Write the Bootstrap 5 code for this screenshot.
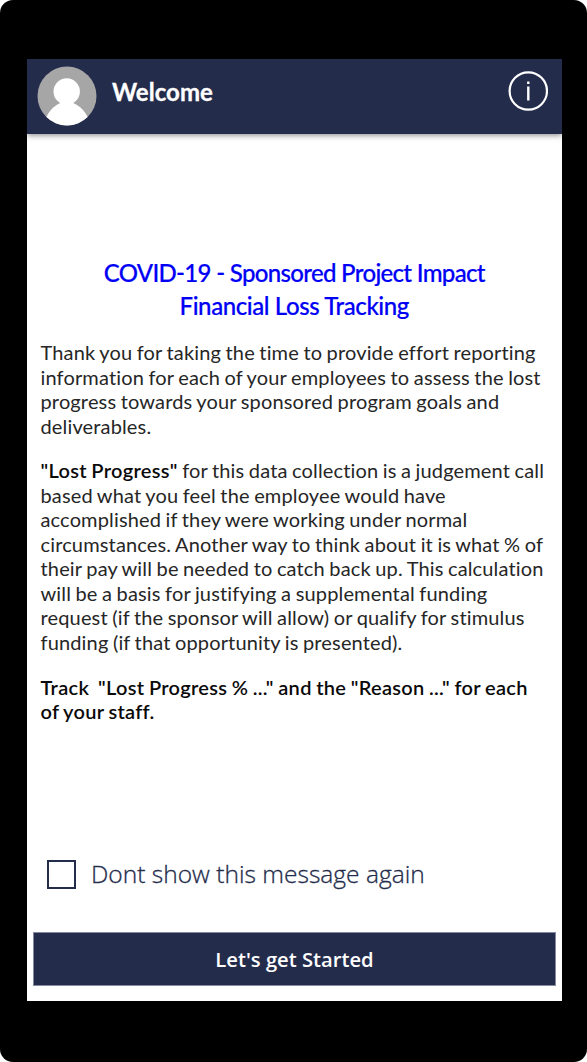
<!DOCTYPE html>
<html lang="en">
<head>
<meta charset="utf-8">
<meta name="viewport" content="width=device-width, initial-scale=1">
<title>Welcome</title>
<link href="https://cdn.jsdelivr.net/npm/bootstrap@5.3.0/dist/css/bootstrap.min.css" rel="stylesheet">
<style>
  :root { --navy: #242c4b; }
  body { background: #fff; font-family: Lato, sans-serif; }
  .device { width: 587px; height: 1062px; background: #000; border-radius: 13px; padding: 59px 25px 61px 27px; }
  .app-header { height: 75px; background: var(--navy); padding: 0 14px 0 10px; box-shadow: 0 1px 6px rgba(0,0,0,.5); }
  .app-title { font-size: 24px; font-weight: 700; line-height: 30px; letter-spacing: .05px; -webkit-text-stroke: .3px #fff; margin: -9px 0 0 15px; }
  .avatar { margin-top: -1px; }
  .info-icon { margin-top: -11px; }
  .message { padding: 123px 14px 0 13.5px; color: #262626; font-size: 20px; line-height: 24.5px; letter-spacing: .15px; word-spacing: -.8px; white-space: nowrap; }
  .message h1 { color: #0000f5; font-size: 24px; font-weight: 500; line-height: 32.5px; letter-spacing: -.4px; word-spacing: 0; -webkit-text-stroke: .2px #0000f5; margin: 0 0 18px; }
  .message h1 .lead-line { letter-spacing: -.68px; }
  .message p { margin: 0 0 20.3px; }
  .message strong { color: #0a0a0a; font-weight: 600; letter-spacing: .3px; }
  .again { margin-top: auto; padding-left: 20px; color: var(--navy); font: 300 24.55px/34px "Open Sans", sans-serif; -webkit-text-stroke: .3px var(--navy); gap: 15px; }
  .again .form-check-input { width: 29px; height: 29px; margin: 0; border: 2px solid var(--navy); border-radius: 0; }
  .start-btn { height: 54px; margin: 41px 6px 15px; padding: 0; border: 1px solid #858aa0; border-radius: 0; background: var(--navy); color: #fff; font: 600 20.2px/50px "Open Sans", sans-serif; }
</style>
</head>
<body>
<div class="device">
  <main class="d-flex flex-column h-100 bg-white">
    <header class="app-header d-flex align-items-center text-white flex-shrink-0">
      <svg class="avatar" width="60" height="60" viewBox="0 0 60 60" aria-hidden="true">
        <defs><clipPath id="face"><circle cx="30" cy="30" r="29.5"/></clipPath></defs>
        <circle cx="30" cy="30" r="29.5" fill="#a6a6a6"/>
        <g fill="#fff" clip-path="url(#face)"><circle cx="29.700" cy="25.500" r="13.200"/><path d="M7 56C12 43 20 36 29.700 36S48 43 53 56V60H7Z"/></g>
      </svg>
      <div class="app-title">Welcome</div>
      <svg class="info-icon ms-auto" width="40" height="40" viewBox="0 0 40 40" role="img" aria-label="Information">
        <circle cx="20.300" cy="20" r="18.700" fill="none" stroke="#fff" stroke-width="2.200"/>
        <path d="M20.300 15.500V29.500M20.300 10.500V13" stroke="#fff" stroke-width="2.400"/>
      </svg>
    </header>
    <section class="message">
      <h1 class="text-center"><span class="lead-line">COVID-19 - Sponsored Project Impact</span><br>Financial Loss Tracking</h1>
      <p>Thank you for taking the time to provide effort reporting<br>information for each of your employees to assess the lost<br>progress towards your sponsored program goals and<br>deliverables.</p>
      <p><strong>"Lost Progress"</strong> for this data collection is a judgement call<br>based what you feel the employee would have<br>accomplished if they were working under normal<br>circumstances. Another way to think about it is what % of<br>their pay will be needed to catch back up. This calculation<br>will be a basis for justifying a supplemental funding<br>request (if the sponsor will allow) or qualify for stimulus<br>funding (if that opportunity is presented).</p>
      <p><strong>Track&nbsp; "Lost Progress % ..." and the "Reason ..." for each<br>of your staff.</strong></p>
    </section>
    <label class="again d-flex align-items-center"><input class="form-check-input" type="checkbox"><span>Dont show this message again</span></label>
    <button class="btn start-btn" type="button">Let's get Started</button>
  </main>
</div>
<script src="https://cdn.jsdelivr.net/npm/bootstrap@5.3.0/dist/js/bootstrap.bundle.min.js"></script>
</body>
</html>
